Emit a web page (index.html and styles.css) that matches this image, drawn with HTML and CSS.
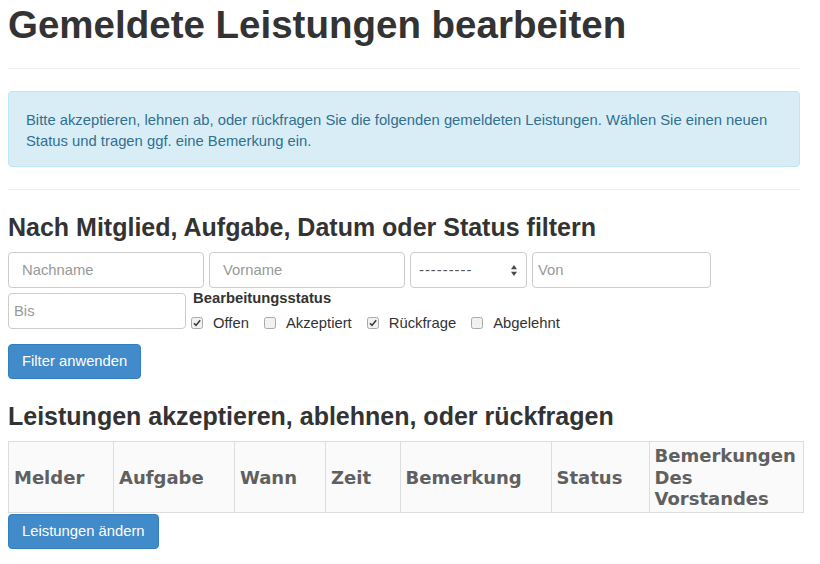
FILE: index.html
```html
<!DOCTYPE html>
<html lang="de">
<head>
<meta charset="utf-8">
<title>Gemeldete Leistungen bearbeiten</title>
<link rel="stylesheet" href="styles.css">
</head>
<body>
<div class="page">
  <div class="page-header">
    <h1 class="title">Gemeldete Leistungen bearbeiten</h1>
  </div>

  <div class="alert">Bitte akzeptieren, lehnen ab, oder rückfragen Sie die folgenden gemeldeten Leistungen. Wählen Sie einen neuen Status und tragen ggf. eine Bemerkung ein.</div>

  <hr class="divider">

  <h3 class="section-title filter-title">Nach Mitglied, Aufgabe, Datum oder Status filtern</h3>

  <form class="filter-form">
    <input class="fc fc-name" type="text" placeholder="Nachname">
    <input class="fc fc-name" type="text" placeholder="Vorname">
    <div class="select-wrap">
      <select class="fc fc-select"><option>---------</option></select>
      <svg class="select-arrows" width="6" height="11" viewBox="0 0 6 11"><polygon points="0,4.3 3,0 6,4.3" fill="#4a4a4a"/><polygon points="0,6.7 3,11 6,6.7" fill="#4a4a4a"/></svg>
    </div>
    <input class="fc fc-date fc-von" type="text" placeholder="Von">
    <input class="fc fc-date fc-bis" type="text" placeholder="Bis">
    <div class="status-group">
      <div class="status-label">Bearbeitungsstatus</div>
      <div class="status-options">
        <label class="opt"><svg class="cb" width="12" height="12" viewBox="0 0 12 12"><rect x="0.5" y="0.5" width="11" height="11" rx="2" fill="#f1f1f1" stroke="#a9a9a9"/><path d="M3 6.3 L5 8.4 L9.2 3.3" fill="none" stroke="#3a3a3a" stroke-width="1.6"/></svg>Offen</label>
        <label class="opt"><svg class="cb" width="12" height="12" viewBox="0 0 12 12"><rect x="0.5" y="0.5" width="11" height="11" rx="2" fill="#f1f1f1" stroke="#a9a9a9"/></svg>Akzeptiert</label>
        <label class="opt"><svg class="cb" width="12" height="12" viewBox="0 0 12 12"><rect x="0.5" y="0.5" width="11" height="11" rx="2" fill="#f1f1f1" stroke="#a9a9a9"/><path d="M3 6.3 L5 8.4 L9.2 3.3" fill="none" stroke="#3a3a3a" stroke-width="1.6"/></svg>Rückfrage</label>
        <label class="opt"><svg class="cb" width="12" height="12" viewBox="0 0 12 12"><rect x="0.5" y="0.5" width="11" height="11" rx="2" fill="#f1f1f1" stroke="#a9a9a9"/></svg>Abgelehnt</label>
      </div>
    </div>
  </form>

  <button class="btn btn-filter" type="button">Filter anwenden</button>

  <h3 class="section-title table-title">Leistungen akzeptieren, ablehnen, oder rückfragen</h3>

  <table class="grid">
    <colgroup>
      <col class="c-melder"><col class="c-aufgabe"><col class="c-wann"><col class="c-zeit"><col class="c-bem"><col class="c-status"><col class="c-vorstand">
    </colgroup>
    <thead>
      <tr>
        <th>Melder</th>
        <th>Aufgabe</th>
        <th>Wann</th>
        <th>Zeit</th>
        <th>Bemerkung</th>
        <th>Status</th>
        <th>Bemerkungen Des Vorstandes</th>
      </tr>
    </thead>
  </table>

  <button class="btn btn-save" type="button">Leistungen ändern</button>
</div>
</body>
</html>
```

FILE: styles.css
```css
* { box-sizing: border-box; }

html, body {
  margin: 0;
  padding: 0;
  background: #ffffff;
}

body {
  font-family: "Liberation Sans", Arial, sans-serif;
  font-size: 14.8px;
  line-height: 21px;
  color: #333333;
}

.page {
  width: 820px;
  padding: 0 20px 0 8px;
}

.page-header {
  padding-bottom: 22px;
  border-bottom: 1px solid #eeeeee;
}

.title {
  margin: 4px 0 0;
  font-size: 38.5px;
  line-height: 42px;
  font-weight: bold;
  color: #333333;
}

.alert {
  margin-top: 22px;
  padding: 18px 17px 14px;
  background: #d9edf7;
  border: 1px solid #bce8f1;
  border-radius: 4px;
  color: #31708f;
  font-size: 14.8px;
  line-height: 21px;
}

.divider {
  margin: 22px 0 0;
  border: 0;
  border-top: 1px solid #eeeeee;
  height: 0;
}

.section-title {
  font-size: 25px;
  line-height: 28px;
  font-weight: bold;
  color: #333333;
  margin: 0;
}

.filter-title { margin-top: 23px; }

.filter-form {
  margin-top: 11px;
  display: flex;
  flex-wrap: wrap;
  column-gap: 5px;
  row-gap: 5px;
  align-items: flex-start;
}

.fc {
  height: 36px;
  border: 1px solid #cccccc;
  border-radius: 4px;
  background: #ffffff;
  font-family: "Liberation Sans", Arial, sans-serif;
  font-size: 14.8px;
  color: #555555;
  margin: 0;
  outline: none;
}

.fc::placeholder { color: #999999; }

.fc-name {
  width: 196px;
  padding: 0 13px;
}

.fc-date { padding: 0 5px; }
.fc-von { width: 179px; }
.fc-bis { width: 178px; }

.select-wrap {
  position: relative;
  width: 117px;
  height: 36px;
}

.fc-select {
  width: 117px;
  -webkit-appearance: none;
  appearance: none;
  padding: 0 8px;
  color: #555555;
  letter-spacing: 1px;
}

.select-arrows {
  position: absolute;
  right: 10px;
  top: 13px;
}

.status-group {
  margin-top: -4px;
  margin-left: 2px;
}

.status-label {
  font-weight: bold;
  font-size: 14.8px;
  line-height: 18px;
  color: #333333;
}

.status-options {
  margin-top: 5px;
  display: flex;
  align-items: center;
  line-height: 22px;
}

.opt {
  display: inline-flex;
  align-items: center;
  margin-right: 15px;
}

.opt:first-child { margin-left: -2px; }

.cb {
  margin-right: 10px;
  flex: none;
}

.btn {
  display: block;
  height: 35px;
  padding: 0 13px;
  background: #428bca;
  border: 1px solid #357ebd;
  border-radius: 4px;
  color: #ffffff;
  font-family: "Liberation Sans", Arial, sans-serif;
  font-size: 14.8px;
  line-height: 33px;
}

.btn-filter { margin-top: 10px; }

.table-title { margin-top: 23px; }

.grid {
  margin-top: 11px;
  table-layout: fixed;
  border-collapse: collapse;
  width: 794.5px;
}

.c-melder { width: 105px; }
.c-aufgabe { width: 121px; }
.c-wann { width: 91px; }
.c-zeit { width: 74.5px; }
.c-bem { width: 151px; }
.c-status { width: 98px; }
.c-vorstand { width: 154px; }

.grid th {
  border: 1px solid #dddddd;
  background: #fafafa;
  padding: 3px 5px 2px;
  text-align: left;
  vertical-align: middle;
  font-family: "DejaVu Sans", Verdana, sans-serif;
  font-weight: bold;
  font-size: 18px;
  line-height: 21.5px;
  color: #606060;
}

.btn-save { margin-top: 1px; }
```
